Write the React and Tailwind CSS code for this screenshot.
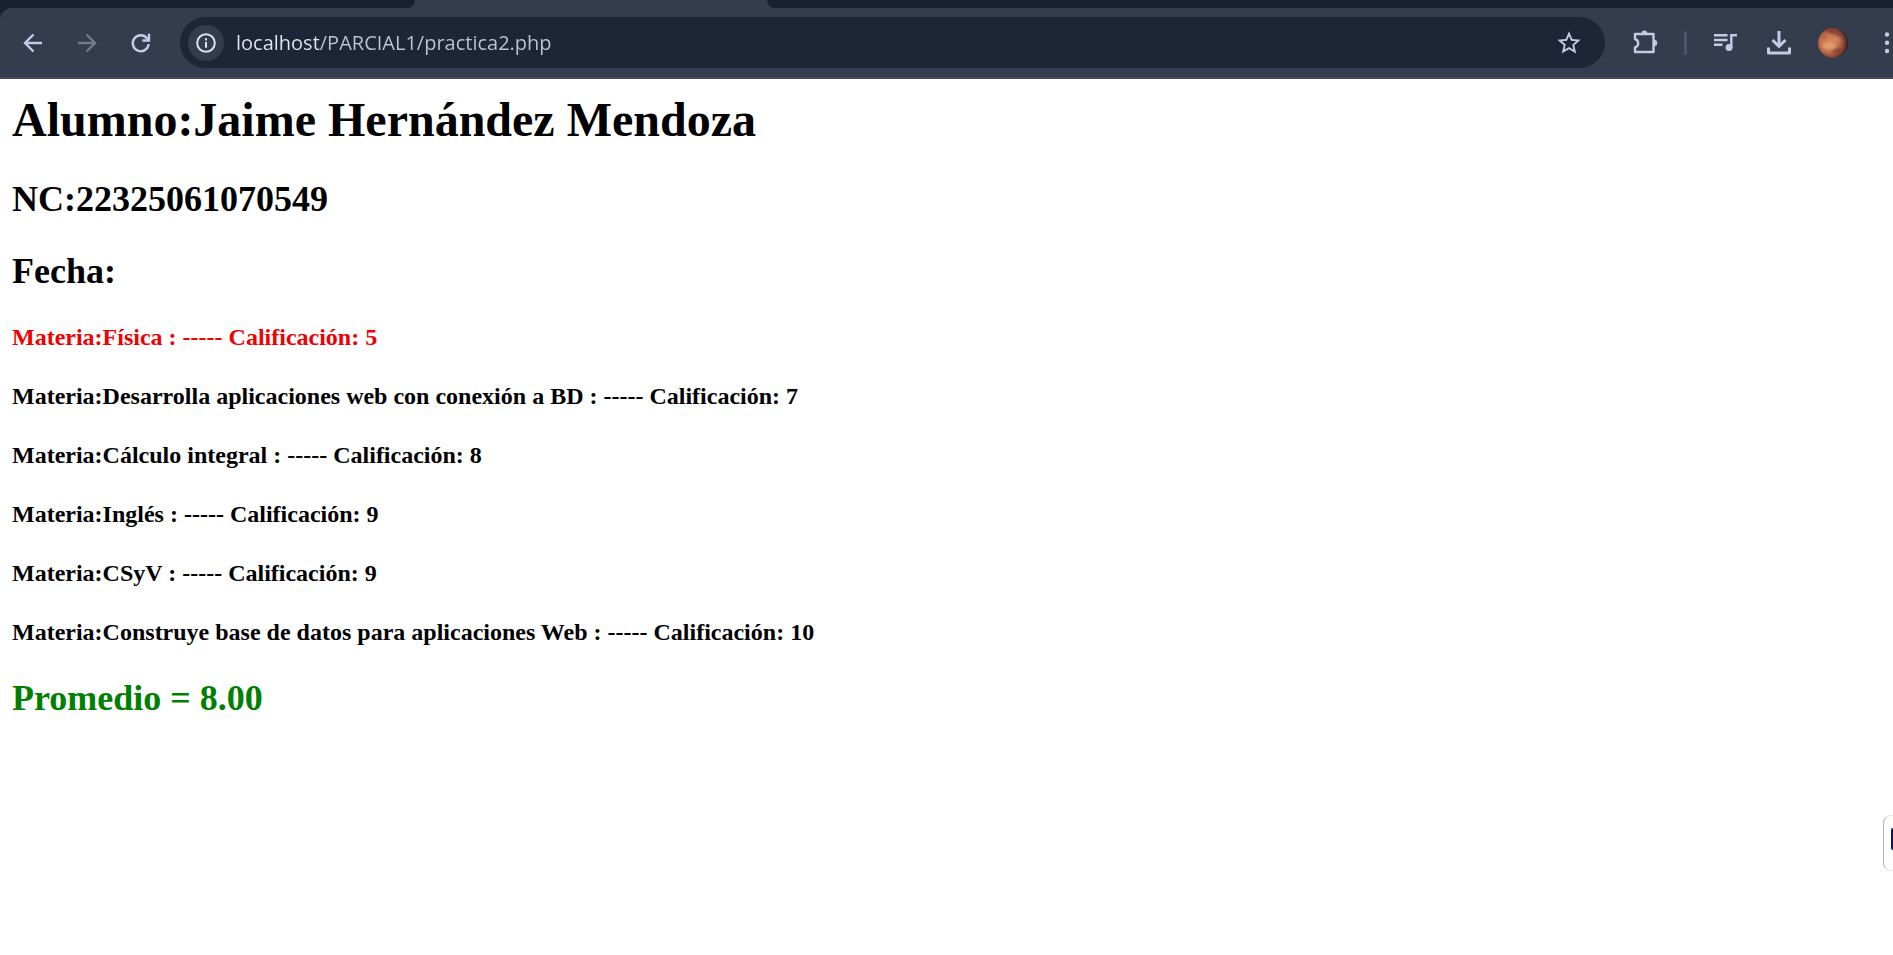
import React from "react";

const subjects = [
  { name: "Física", grade: 5 },
  { name: "Desarrolla aplicaciones web con conexión a BD", grade: 7 },
  { name: "Cálculo integral", grade: 8 },
  { name: "Inglés", grade: 9 },
  { name: "CSyV", grade: 9 },
  { name: "Construye base de datos para aplicaciones Web", grade: 10 },
];

function ToolButton({ label, children, className = "w-[54px] justify-center" }) {
  return (
    <button type="button" aria-label={label} className={`flex h-9 shrink-0 items-center ${className}`}>
      {children}
    </button>
  );
}

function Svg({ size = 28, children }) {
  return (
    <svg width={size} height={size} viewBox={`0 0 ${size} ${size}`} fill="none" stroke="currentColor" strokeWidth="2.4" aria-hidden="true">
      {children}
    </svg>
  );
}

function BackIcon() {
  return (
    <Svg>
      <path d="M23 14H6.5M14.5 5.5L6 14l8.500 8.500" />
    </Svg>
  );
}

function ForwardIcon() {
  return (
    <Svg>
      <path d="M5 14H21.500M13.500 5.500L22 14l-8.500 8.500" />
    </Svg>
  );
}

function ReloadIcon() {
  return (
    <Svg>
      <path d="M21.700 15.200A8 8 0 1 1 20 9.200L21.500 11" />
      <path d="M22 4.800V11.500H15.300" />
    </Svg>
  );
}

function InfoIcon() {
  return (
    <svg width="20" height="20" viewBox="0 0 20 20" fill="none" stroke="currentColor" strokeWidth="2" aria-hidden="true">
      <circle cx="10" cy="10" r="8.800" />
      <path d="M10 9v5.800M10 5.300v2.200" />
    </svg>
  );
}

function StarIcon() {
  return (
    <svg width="28" height="28" viewBox="0 0 24 24" fill="currentColor" aria-hidden="true">
      <path d="M22 9.240l-7.190-.62L12 2 9.190 8.630 2 9.240l5.460 4.730L5.820 21 12 17.270 18.180 21l-1.630-7.030L22 9.240zM12 15.400l-3.760 2.270 1-4.280-3.320-2.880 4.380-.38L12 6.100l1.710 4.040 4.380.38-3.320 2.880 1 4.280L12 15.400z" />
    </svg>
  );
}

function PuzzleIcon() {
  return (
    <Svg size={30}>
      <path
        strokeLinejoin="round"
        d="M4 6H22.500V24H4V19.300A4.300 4.300 0 0 0 4 11Z"
      />
      <path d="M10.500 5.500a2.900 2.900 0 0 1 5.800 0ZM23 11.800a3.200 3.200 0 0 1 0 6.400Z" fill="currentColor" stroke="none" />
    </Svg>
  );
}

function QueueIcon() {
  return (
    <Svg>
      <path d="M3 6.300H16.500M3 11H16.500M3 15.700H11.500" />
      <path d="M20.300 18.500V6.300H26" />
      <circle cx="18" cy="18.500" r="3.500" fill="currentColor" stroke="none" />
    </Svg>
  );
}

function DownloadIcon() {
  return (
    <Svg>
      <path strokeWidth="3" d="M14 2V17M7.500 11l6.500 6.500L20.500 11" />
      <path strokeWidth="3" strokeLinejoin="round" d="M3.500 18.500V24H24.500V18.500" />
    </Svg>
  );
}

function PlanetAvatar() {
  return (
    <svg width="30" height="30" viewBox="0 0 30 30" aria-hidden="true">
      <defs>
        <radialGradient id="planet" cx="0.38" cy="0.5" r="0.64">
          <stop offset="0" stopColor="#dd8d60" />
          <stop offset="0.45" stopColor="#c57450" />
          <stop offset="0.75" stopColor="#8a4534" />
          <stop offset="1" stopColor="#241420" />
        </radialGradient>
        <filter id="soft">
          <feGaussianBlur stdDeviation="1" />
        </filter>
        <clipPath id="disc">
          <circle cx="15" cy="15" r="15" />
        </clipPath>
      </defs>
      <g clipPath="url(#disc)">
        <rect width="30" height="30" fill="url(#planet)" />
        <g filter="url(#soft)">
          <path d="M11 1Q19 3 24 9L17 5.500Q13 6 9 4Z" fill="#6d2c25" opacity="0.6" />
          <path d="M13 23Q17 19 23 20L24 24L18 26Z" fill="#6b3027" opacity="0.5" />
          <path d="M3 9Q7 7 10 9L6 12Z" fill="#a64c36" opacity="0.5" />
          <ellipse cx="11" cy="18" rx="7" ry="3.500" fill="#efaa70" opacity="0.6" />
          <ellipse cx="18" cy="12" rx="5" ry="2.500" fill="#dc9068" opacity="0.5" />
        </g>
      </g>
    </svg>
  );
}

function KebabIcon() {
  return (
    <svg width="12" height="28" viewBox="0 0 12 28" fill="currentColor" aria-hidden="true">
      <circle cx="6" cy="5.500" r="2.200" />
      <circle cx="6" cy="13.700" r="2.200" />
      <circle cx="6" cy="22" r="2.200" />
    </svg>
  );
}

function BrowserBar() {
  return (
    <header className="bg-[#182131] text-[#c3cce2]">
      <div className="flex h-2 justify-between bg-[#333d4d]">
        <div className="w-[415px] rounded-br-xl bg-[#182131]" />
        <div className="w-[1126px] rounded-bl-xl bg-[#182131]" />
      </div>
      <div className="flex h-[71px] items-center rounded-tl-xl border-b-2 border-[#484b51] bg-[#333d4d] pl-[6px]">
        <ToolButton label="Atrás"><BackIcon /></ToolButton>
        <ToolButton label="Adelante" className="w-[54px] justify-center text-[#727a8b]"><ForwardIcon /></ToolButton>
        <ToolButton label="Recargar"><ReloadIcon /></ToolButton>
        <div className="mr-[14px] ml-3 flex h-[51px] min-w-0 flex-1 items-center rounded-full bg-[#1d2636] pr-[9px] pl-2">
          <button type="button" aria-label="Información del sitio" className="flex size-9 shrink-0 items-center justify-center rounded-full bg-[#333d4d] text-[#dfe3ee]">
            <InfoIcon />
          </button>
          <input
            type="text"
            aria-label="Dirección"
            defaultValue="localhost/PARCIAL1/practica2.php"
            className="ml-3 h-9 min-w-0 flex-1 bg-linear-to-r from-[#e4e7f3] from-[83px] to-[#c0c5d3] to-[83px] bg-clip-text font-['Open_Sans',sans-serif] text-[20px] text-transparent outline-none"
          />
          <ToolButton label="Añadir a marcadores"><StarIcon /></ToolButton>
        </div>
        <ToolButton label="Extensiones"><PuzzleIcon /></ToolButton>
        <div className="flex w-[25px] shrink-0 justify-center">
          <div className="h-6 w-[3px] rounded-full bg-[#4c566a]" />
        </div>
        <ToolButton label="Control multimedia"><QueueIcon /></ToolButton>
        <ToolButton label="Descargas"><DownloadIcon /></ToolButton>
        <ToolButton label="Perfil"><PlanetAvatar /></ToolButton>
        <ToolButton label="Menú" className="w-[33px] justify-end"><KebabIcon /></ToolButton>
      </div>
    </header>
  );
}

export default function App() {
  return (
    <div className="min-h-screen overflow-hidden bg-white">
      <BrowserBar />
      <main className="px-3 pt-[13px] pb-3 font-['Liberation_Serif',serif] font-bold text-black">
        <h1 className="text-[48px] leading-[56px]">Alumno:Jaime Hernández Mendoza</h1>
        <h2 className="mt-[30px] text-[36px] leading-[42px]">NC:22325061070549</h2>
        <h2 className="mt-[30px] text-[36px] leading-[42px]">Fecha:</h2>
        <div className="mt-8 mb-[31px] flex flex-col gap-8 text-[24px] leading-[27px]">
          {subjects.map(({ name, grade }) => (
            <h4 key={name} className={grade < 6 ? "text-[#f00000]" : "text-black"}>
              {`Materia:${name} : ----- Calificación: ${grade}`}
            </h4>
          ))}
        </div>
        <h2 className="text-[36px] leading-[42px] text-[#008000]">Promedio = 8.00</h2>
      </main>
      <aside className="fixed right-0 bottom-[84px] flex h-14 w-[10px] justify-end rounded-l-lg border-y border-l border-[#b5b5b5] border-y-[#e4e4e4] bg-white pt-3">
        <div className="h-[22px] w-[2px] rounded-l-sm bg-[#14145a]" />
      </aside>
    </div>
  );
}
